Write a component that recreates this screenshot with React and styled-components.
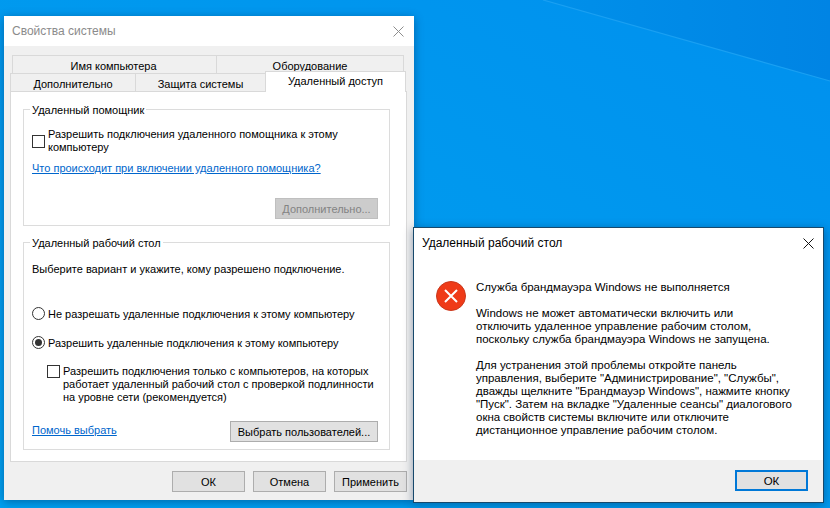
import React from "react";
import styled, { createGlobalStyle } from "styled-components";

const Global = createGlobalStyle`
  html, body { margin: 0; padding: 0; width: 830px; height: 508px; overflow: hidden; }
  body { font-family: "Liberation Sans", Arial, sans-serif; font-size: 11px; color: #000; }
  * { box-sizing: border-box; }
`;

const Desktop = styled.div`
  position: relative;
  width: 830px;
  height: 508px;
  overflow: hidden;
  background: #009aee;
`;

const Wallpaper = styled.svg`
  position: absolute;
  inset: 0;
`;

const Win = styled.section`
  position: absolute;
  left: ${p => p.$x}px;
  top: ${p => p.$y}px;
  width: ${p => p.$w}px;
  height: ${p => p.$h}px;
  display: flex;
  flex-direction: column;
  font-size: ${p => p.$font}px;
  background: #fff;
  box-shadow: 0 2px 9px rgba(0, 30, 70, 0.42);
  border: ${p => (p.$active ? "1px solid #17496c" : "none")};
`;

const TitleBar = styled.header`
  height: 30px;
  flex: none;
  display: flex;
  align-items: center;
  justify-content: space-between;
  font-size: 12px;
  padding: ${p => p.$pad};
  color: ${p => (p.$active ? "#000" : "#8b8b8b")};
`;

const CloseIcon = styled.svg`
  width: 11px;
  height: 11px;
  stroke: ${p => (p.$active ? "#111" : "#8d8d8d")};
  stroke-width: 1;
  fill: none;
`;

const DialogBody = styled.div`
  flex: 1;
  display: flex;
  flex-direction: column;
  min-height: 0;
  background: #f0f0f0;
  padding: 9px 7px 0 6px;
`;

const TabRowTop = styled.div`
  display: flex;
  height: 18px;
  margin: 0 3px 0 2px;
`;

const TabRowBottom = styled.div`
  display: flex;
  align-items: flex-end;
  height: 18px;
  position: relative;
  z-index: 1;
`;

const Tab = styled.div`
  flex: ${p => `0 0 ${p.$w}px`};
  height: 18px;
  display: flex;
  align-items: center;
  justify-content: center;
  padding: 2px ${p => p.$nudge || 0}px 0 0;
  background: #f0f0f0;
  border: 1px solid #d9d9d9;
  border-bottom: none;
  margin-right: -1px;
`;

const ActiveTab = styled.div`
  flex: 0 0 141px;
  height: 21px;
  margin-bottom: -1px;
  display: flex;
  align-items: center;
  justify-content: center;
  padding-bottom: 3px;
  background: #fff;
  border: 1px solid #d9d9d9;
  border-bottom: none;
`;

const Panel = styled.div`
  height: 371px;
  flex: none;
  display: flex;
  flex-direction: column;
  gap: 16px;
  background: #fff;
  border: 1px solid #d9d9d9;
  padding: 17px 16px 0 12px;
`;

const Group = styled.div`
  position: relative;
  height: ${p => p.$h}px;
  flex: none;
  border: 1px solid #dcdcdc;
  padding: ${p => p.$pad};
  display: flex;
  flex-direction: column;
`;

const Legend = styled.span`
  position: absolute;
  left: 6px;
  top: -8px;
  padding: 0 2px;
  line-height: 16px;
  background: #fff;
`;

const Check = styled.span`
  flex: none;
  width: 13px;
  height: 13px;
  border: 1px solid #333;
  background: #fff;
`;

const CheckRow = styled.div`
  display: flex;
  align-items: ${p => p.$align};
  gap: 3px;
  line-height: 13px;
  margin-left: ${p => p.$indent || 0}px;
  margin-top: ${p => p.$top || 0}px;
`;

const RadioRow = styled.div`
  display: flex;
  align-items: center;
  gap: 3px;
  height: 13px;
  margin-top: ${p => p.$top}px;
`;

const Radio = styled.span`
  flex: none;
  width: 13px;
  height: 13px;
  border: 1px solid #333;
  border-radius: 50%;
  background: #fff;
  display: flex;
  align-items: center;
  justify-content: center;
  &::after {
    content: "";
    display: ${p => (p.$on ? "block" : "none")};
    width: 7px;
    height: 7px;
    border-radius: 50%;
    background: #333;
  }
`;

const Link = styled.a`
  display: block;
  color: #0066cc;
  text-decoration: underline;
  line-height: 13px;
  margin-top: ${p => p.$top || 0}px;
`;

const Para = styled.p`
  margin: ${p => p.$top || 0}px 0 0;
  line-height: 13px;
`;

const Button = styled.button`
  flex: none;
  width: ${p => p.$w}px;
  height: 21px;
  padding: 0;
  font: inherit;
  color: #000;
  background: #e1e1e1;
  border: 1px solid #adadad;
`;

const DisabledButton = styled(Button)`
  color: #838383;
  background: #cccccc;
  border-color: #bfbfbf;
`;

const DefaultButton = styled(Button)`
  border: 2px solid #0078d7;
`;

const ButtonEnd = styled.div`
  display: flex;
  justify-content: flex-end;
  margin-top: ${p => p.$top}px;
`;

const HelpRow = styled.div`
  display: flex;
  justify-content: space-between;
  align-items: flex-start;
  margin-top: 17px;
`;

const Footer = styled.div`
  display: flex;
  justify-content: flex-end;
  gap: 8px;
  margin-top: 9px;
`;

const MessageArea = styled.div`
  flex: 1;
  display: flex;
  gap: 10px;
  padding: 23px 12px 0 22px;
  background: #fff;
`;

const MessageText = styled.div`
  display: flex;
  flex-direction: column;
`;

const MessageFooter = styled.div`
  flex: none;
  height: 42px;
  background: #f0f0f0;
  display: flex;
  justify-content: flex-end;
  align-items: flex-start;
  padding: 10px 15px 0 0;
`;

const ErrorIcon = styled.svg`
  flex: none;
  width: 30px;
  height: 30px;
`;

const X = ({ active }) => (
  <CloseIcon $active={active} viewBox="0 0 11 11">
    <path d="M0.5 0.5 L10.5 10.5 M10.5 0.5 L0.5 10.5" />
  </CloseIcon>
);

export default function App() {
  return (
    <Desktop>
      <Global />
      <Wallpaper width="830" height="508" viewBox="0 0 830 508">
        <defs>
          <linearGradient id="bg" x1="0" y1="1" x2="1" y2="0">
            <stop offset="0" stopColor="#00a0f0" />
            <stop offset="0.6" stopColor="#0098ee" />
            <stop offset="1" stopColor="#0090ee" />
          </linearGradient>
          <linearGradient id="top" x1="0" y1="0" x2="1" y2="0">
            <stop offset="0" stopColor="#0090ea" />
            <stop offset="1" stopColor="#0084e4" />
          </linearGradient>
        </defs>
        <rect width="830" height="508" fill="url(#bg)" />
        <polygon points="543,0 830,0 830,81" fill="url(#top)" />
        <line x1="543" y1="0" x2="830" y2="81" stroke="#1aa0f2" strokeWidth="1.2" />
      </Wallpaper>

      <Win $x={4} $y={16} $w={410} $h={484} $font={11}>
        <TitleBar $pad="0 10px 0 8px">
          <span>Свойства системы</span>
          <X />
        </TitleBar>
        <DialogBody>
          <TabRowTop>
            <Tab $w={205} $nudge={2}>Имя компьютера</Tab>
            <Tab $w={188}>Оборудование</Tab>
          </TabRowTop>
          <TabRowBottom>
            <Tab $w={126}>Дополнительно</Tab>
            <Tab $w={131}>Защита системы</Tab>
            <ActiveTab>Удаленный доступ</ActiveTab>
          </TabRowBottom>
          <Panel>
            <Group $h={117} $pad="18px 11px 0 8px">
              <Legend>Удаленный помощник</Legend>
              <CheckRow $align="center">
                <Check />
                <span>Разрешить подключения удаленного помощника к этому компьютеру</span>
              </CheckRow>
              <Link $top={8}>Что происходит при включении удаленного помощника?</Link>
              <ButtonEnd $top={23}>
                <DisabledButton $w={103}>Дополнительно...</DisabledButton>
              </ButtonEnd>
            </Group>
            <Group $h={208} $pad="20px 11px 0 8px">
              <Legend>Удаленный рабочий стол</Legend>
              <Para>Выберите вариант и укажите, кому разрешено подключение.</Para>
              <RadioRow $top={31}>
                <Radio />
                <span>Не разрешать удаленные подключения к этому компьютеру</span>
              </RadioRow>
              <RadioRow $top={16}>
                <Radio $on />
                <span>Разрешить удаленные подключения к этому компьютеру</span>
              </RadioRow>
              <CheckRow $indent={15} $top={16} $align="flex-start">
                <Check />
                <span>
                  Разрешить подключения только с компьютеров, на которых работает удаленный рабочий
                  стол с проверкой подлинности на уровне сети (рекомендуется)
                </span>
              </CheckRow>
              <HelpRow>
                <Link $top={3}>Помочь выбрать</Link>
                <Button $w={148}>Выбрать пользователей...</Button>
              </HelpRow>
            </Group>
          </Panel>
          <Footer>
            <Button $w={73}>ОК</Button>
            <Button $w={73}>Отмена</Button>
            <Button $w={73}>Применить</Button>
          </Footer>
        </DialogBody>
      </Win>

      <Win $x={413} $y={227} $w={411} $h={276} $font={11.5} $active>
        <TitleBar $pad="0 9px 0 8px" $active>
          <span>Удаленный рабочий стол</span>
          <X active />
        </TitleBar>
        <MessageArea>
          <ErrorIcon viewBox="0 0 30 30">
            <circle cx="15" cy="15" r="14.5" fill="#ef3b18" stroke="#c9381c" strokeWidth="1" />
            <path d="M9 9 L21 21 M21 9 L9 21" stroke="#fff" strokeWidth="2" fill="none" />
          </ErrorIcon>
          <MessageText>
            <Para>Служба брандмауэра Windows не выполняется</Para>
            <Para $top={13}>
              Windows не может автоматически включить или
              <br />
              отключить удаленное управление рабочим столом,
              <br />
              поскольку служба брандмауэра Windows не запущена.
            </Para>
            <Para $top={13}>
              Для устранения этой проблемы откройте панель
              <br />
              управления, выберите "Администрирование", "Службы",
              <br />
              дважды щелкните "Брандмауэр Windows", нажмите кнопку
              <br />
              "Пуск". Затем на вкладке "Удаленные сеансы" диалогового
              <br />
              окна свойств системы включите или отключите
              <br />
              дистанционное управление рабочим столом.
            </Para>
          </MessageText>
        </MessageArea>
        <MessageFooter>
          <DefaultButton $w={73}>ОК</DefaultButton>
        </MessageFooter>
      </Win>
    </Desktop>
  );
}
